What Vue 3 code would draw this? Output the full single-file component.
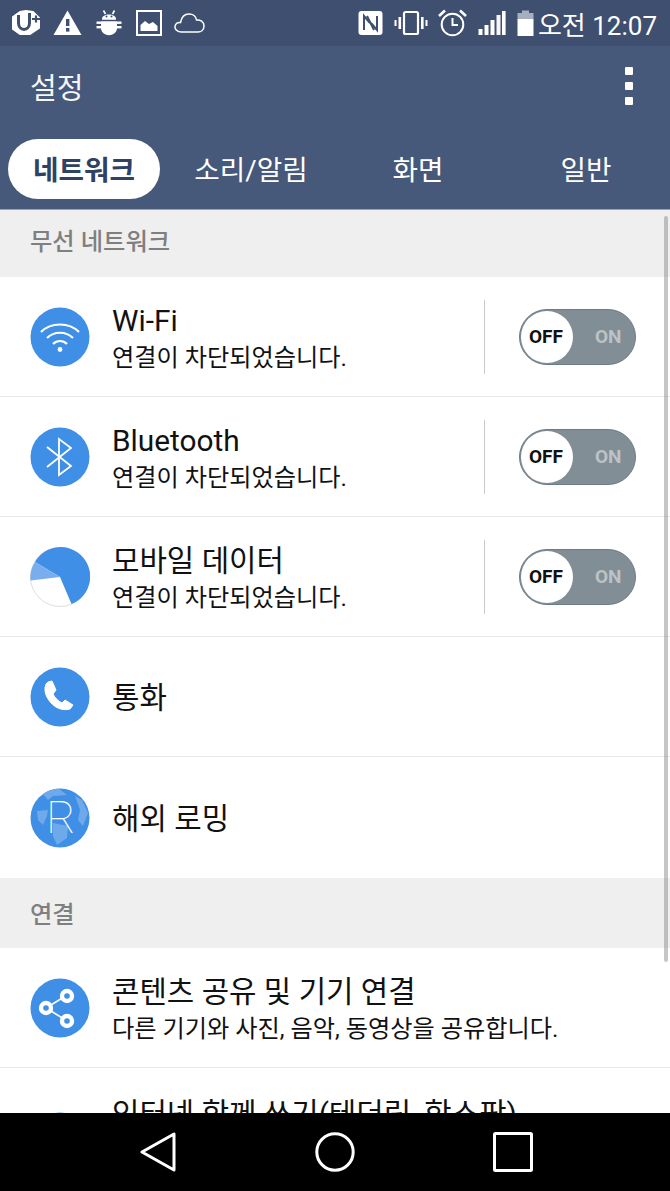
<template>
  <div class="phone">
    <div class="status">
      <div class="status-left">
        <svg class="logo" width="30" height="26" viewBox="0 0 30 26">
          <path d="M9 2 L15 1 L22 2 L28 8 L28 18 L19 24 L9 24 L2 19 L2 7 Z" fill="#fff" stroke="#fff" stroke-width="2" stroke-linejoin="round" />
          <path d="M7.500 5 V13 C7.500 21.500 18.500 21.500 18.500 13 V3" fill="none" stroke="#3f4f6f" stroke-width="3" />
          <path d="M21 9 H29 M25 5.500 V12.500" stroke="#3f4f6f" stroke-width="2.200" />
        </svg>
        <svg class="warn" width="29" height="26" viewBox="0 0 29 26">
          <path d="M14.500 0.500 L28.500 25 H0.500 Z" fill="#fff" />
          <rect x="13" y="9" width="3.400" height="7" fill="#3f4f6f" />
          <rect x="13" y="18" width="3.400" height="3.600" fill="#3f4f6f" />
        </svg>
        <svg class="droid" width="26" height="26" viewBox="0 0 26 26">
          <path d="M6 9 C6 3 20 3 20 9 V9.800 H6 Z" fill="#fff" />
          <path d="M7.500 0.500 L9.500 4 M18.500 0.500 L16.500 4" stroke="#fff" stroke-width="1.600" />
          <rect x="0.500" y="11.500" width="25" height="2.400" fill="#fff" />
          <rect x="0.500" y="16" width="25" height="2.400" fill="#fff" />
          <path d="M5 11.500 H21 V18 C21 27.500 5 27.500 5 18 Z" fill="#fff" />
          <circle cx="10.500" cy="6.600" r="1" fill="#3f4f6f" />
          <circle cx="15.500" cy="6.600" r="1" fill="#3f4f6f" />
        </svg>
        <svg class="pic" width="26" height="26" viewBox="0 0 26 26">
          <rect x="1" y="1" width="24" height="24" fill="none" stroke="#fff" stroke-width="2" />
          <path d="M4.500 21 V15 L9 11 L13 14 L17 12 L21.500 16 V21 Z" fill="#fff" />
        </svg>
        <svg class="cloud" width="31" height="22" viewBox="0 0 31 22">
          <path d="M7 20 C2 20 0.800 16 1 14.500 C1.300 11.500 4 10 6.500 10.500 C7.500 5 11 2 15 2 C19 2 22 4.500 22.500 8 C26 7.500 30 9.500 30 14 C30 18 27 20 24 20 Z" fill="none" stroke="#fff" stroke-width="1.500" />
        </svg>
      </div>
      <div class="status-right">
        <svg class="nfc" width="25" height="26" viewBox="0 0 25 26">
          <rect x="0.500" y="1" width="24" height="24" rx="3" fill="#fff" />
          <path d="M6 20 V6 L12 13 M19 6 V20 L13 13" fill="none" stroke="#3f4f6f" stroke-width="2" />
          <path d="M9 6 L16 20" stroke="#3f4f6f" stroke-width="2" />
        </svg>
        <svg class="vib" width="34" height="26" viewBox="0 0 34 26">
          <rect x="10" y="2" width="14" height="22" rx="1.500" fill="none" stroke="#fff" stroke-width="2.200" />
          <rect x="0.500" y="10" width="2" height="6" fill="#fff" />
          <rect x="4.500" y="7" width="2.600" height="12" fill="#fff" />
          <rect x="27" y="7" width="2.600" height="12" fill="#fff" />
          <rect x="31.500" y="10" width="2" height="6" fill="#fff" />
        </svg>
        <svg class="alarm" width="29" height="28" viewBox="0 0 29 28">
          <circle cx="14.500" cy="15.500" r="10.800" fill="none" stroke="#fff" stroke-width="2" />
          <path d="M14.500 9 V16 H20" fill="none" stroke="#fff" stroke-width="2" />
          <path d="M1 7 L7 1.500 M28 7 L22 1.500" stroke="#fff" stroke-width="2.600" />
        </svg>
        <svg class="signal" width="28" height="26" viewBox="0 0 28 26">
          <rect x="0.500" y="19" width="4" height="6" fill="#fff" />
          <rect x="6.500" y="15" width="4" height="10" fill="#fff" />
          <rect x="12.500" y="10" width="4" height="15" fill="#fff" />
          <rect x="18.500" y="5" width="4" height="20" fill="#fff" opacity="0.950" />
          <rect x="24" y="1" width="3.600" height="24" fill="#fff" />
        </svg>
        <svg class="battery" width="17" height="27" viewBox="0 0 17 27">
          <rect x="5" y="0.500" width="7" height="3" fill="#a6afbf" />
          <rect x="0.500" y="3" width="16" height="6" fill="#a6afbf" />
          <rect x="0.500" y="9" width="16" height="17" fill="#fff" />
        </svg>
        <span class="clock">오전 12:07</span>
      </div>
    </div>

    <div class="header">
      <div class="titlebar">
        <span class="title">설정</span>
        <div class="more"><i></i><i></i><i></i></div>
      </div>
      <div class="tabs">
        <span v-for="(t, i) in tabs" :key="t" class="tab" :class="{ active: i === 0 }">{{ t }}</span>
      </div>
    </div>

    <div class="content">
      <div class="scrollbar"></div>
      <div class="section">무선 네트워크</div>

      <div v-for="r in toggleRows" :key="r.title" class="row">
        <svg v-if="r.icon === 'wifi'" class="icon" viewBox="0 0 60 60">
          <circle cx="30" cy="30" r="29.500" fill="#3f8fe6" />
          <path d="M11 25 C21 15 39 15 49 25" fill="none" stroke="#fff" stroke-width="2.200" />
          <path d="M17 31 C24 24 36 24 43 31" fill="none" stroke="#fff" stroke-width="2.200" />
          <path d="M23 37 C27 33 33 33 37 37" fill="none" stroke="#fff" stroke-width="2.200" />
          <circle cx="30" cy="42.500" r="2.400" fill="#fff" />
        </svg>
        <svg v-else-if="r.icon === 'bt'" class="icon" viewBox="0 0 60 60">
          <circle cx="30" cy="30" r="29.500" fill="#3f8fe6" />
          <path d="M17 20 L41 39 L29 48 V12 L41 21 L17 40" fill="none" stroke="#fff" stroke-width="1.800" />
        </svg>
        <svg v-else class="icon" viewBox="0 0 60 60">
          <circle cx="30" cy="30" r="29.500" fill="#fff" stroke="#d4d4d4" stroke-width="0.800" />
          <path d="M30 30 L41.500 57 A29.500 29.500 0 1 0 5 15 Z" fill="#3f8fe6" />
          <path d="M30 30 L5 15 A29.500 29.500 0 0 0 0.500 33.500 Z" fill="#78aeed" />
        </svg>
        <div class="text">
          <div class="name">{{ r.title }}</div>
          <div class="sub">연결이 차단되었습니다.</div>
        </div>
        <div class="divider"></div>
        <div class="toggle">
          <span class="knob">OFF</span>
          <span class="on">ON</span>
        </div>
      </div>

      <div class="row">
        <svg class="icon" viewBox="0 0 60 60">
          <circle cx="30" cy="30" r="29.500" fill="#3f8fe6" />
          <path d="M18 15 L22 14 L26 23 L23 27 C25 31 28 34 32 36 L35 33 L43 38 L40 42 C30 45 20 38 16 28 C14 22 15 17 18 15 Z" fill="#fff" stroke="#fff" stroke-width="1" stroke-linejoin="round" />
        </svg>
        <div class="text"><div class="name">통화</div></div>
      </div>

      <div class="row plain">
        <svg class="icon" viewBox="0 0 60 60">
          <defs>
            <clipPath id="globe"><circle cx="30" cy="30" r="29.500" /></clipPath>
          </defs>
          <circle cx="30" cy="30" r="29.500" fill="#3f8fe6" />
          <g clip-path="url(#globe)" fill="#6ea9ea">
            <path d="M12 5 L28 0 L37 7 L23 8 L18 12 Z" />
            <path d="M7 23 L18 22 L17 28 L13 37 L8 32 Z" />
            <path d="M23 35 L38 38 L37 50 L27 57 L23 48 Z" />
            <path d="M45 8 L52 12 L58 25 L53 38 L48 32 L50 22 Z" />
          </g>
          <text x="31" y="45" text-anchor="middle" class="roam">R</text>
        </svg>
        <div class="text"><div class="name">해외 로밍</div></div>
      </div>

      <div class="section connect">연결</div>

      <div class="row">
        <svg class="icon" viewBox="0 0 60 60">
          <circle cx="30" cy="30" r="29.500" fill="#3f8fe6" />
          <path d="M16 30 L34 19 M16 30 L34 41" stroke="#fff" stroke-width="1.600" />
          <circle cx="16" cy="30" r="5" fill="#3f8fe6" stroke="#fff" stroke-width="4.400" />
          <circle cx="37" cy="18" r="5" fill="#3f8fe6" stroke="#fff" stroke-width="4.400" />
          <circle cx="37" cy="43" r="5" fill="#3f8fe6" stroke="#fff" stroke-width="4.400" />
        </svg>
        <div class="text">
          <div class="name">콘텐츠 공유 및 기기 연결</div>
          <div class="sub">다른 기기와 사진, 음악, 동영상을 공유합니다.</div>
        </div>
      </div>

      <div class="row cutoff">
        <svg class="icon" viewBox="0 0 60 60">
          <circle cx="30" cy="30" r="29.500" fill="#3f8fe6" />
        </svg>
        <div class="text">
          <div class="name">인터넷 함께 쓰기(테더링, 핫스팟)</div>
        </div>
      </div>
    </div>

    <div class="nav">
      <svg width="36" height="40" viewBox="0 0 36 40">
        <path d="M34 2 V38 L2 20 Z" fill="none" stroke="#fff" stroke-width="3" stroke-linejoin="round" />
      </svg>
      <svg width="40" height="40" viewBox="0 0 40 40">
        <circle cx="20" cy="20" r="18.200" fill="none" stroke="#fff" stroke-width="3" />
      </svg>
      <svg width="40" height="40" viewBox="0 0 40 40">
        <rect x="1.500" y="1.500" width="37" height="37" rx="1" fill="none" stroke="#fff" stroke-width="3" />
      </svg>
    </div>
  </div>
</template>

<script setup>
const tabs = ['네트워크', '소리/알림', '화면', '일반']

const toggleRows = [
  { title: 'Wi-Fi', icon: 'wifi' },
  { title: 'Bluetooth', icon: 'bt' },
  { title: '모바일 데이터', icon: 'data' }
]
</script>

<style>
html, body {
  margin: 0;
  background: #fff;
  overflow: hidden;
}
</style>

<style scoped>
.phone {
  width: 670px;
  height: 1191px;
  display: flex;
  flex-direction: column;
  overflow: hidden;
  font-family: Roboto, "Noto Sans CJK KR", sans-serif;
  color: #111;
}

.status {
  height: 46px;
  flex: none;
  background: #3f4f6f;
  display: flex;
  justify-content: space-between;
  align-items: center;
  padding: 0 13px 0 11px;
  color: #fff;
}
.status svg {
  display: block;
}
.status-left {
  display: flex;
  align-items: center;
}
.status-left .warn {
  margin-left: 12px;
}
.status-left .droid {
  margin-left: 14px;
}
.status-left .pic {
  margin-left: 14px;
}
.status-left .cloud {
  margin-left: 12px;
}
.status-right {
  display: flex;
  align-items: center;
  gap: 10px;
}
.status-right .nfc {
  margin-right: 1px;
}
.status-right .signal {
  margin-left: 1px;
}
.status-right .battery {
  margin-right: -12px;
  margin-left: 1px;
}
.clock {
  font-size: 26px;
  margin-left: 6px;
  white-space: nowrap;
}

.header {
  height: 164px;
  flex: none;
  background: #46597a;
  border-bottom: 1px solid #98a3b6;
  box-sizing: border-box;
  color: #fff;
}
.titlebar {
  height: 82px;
  display: flex;
  justify-content: space-between;
  align-items: center;
  padding: 0 37px 2px 30px;
  box-sizing: border-box;
}
.title {
  font-size: 29px;
  color: #f4f6f8;
}
.more {
  display: flex;
  flex-direction: column;
  gap: 7px;
}
.more i {
  display: block;
  width: 8px;
  height: 8px;
  background: #fff;
  border-radius: 1px;
}
.tabs {
  display: grid;
  grid-template-columns: 152px 182px 152px 184px;
  padding: 11px 0 0 8px;
}
.tab {
  height: 60px;
  box-sizing: border-box;
  padding-bottom: 2px;
  border-radius: 30px;
  display: flex;
  align-items: center;
  justify-content: center;
  font-size: 27.700px;
  color: #fff;
}
.tab.active {
  background: #fff;
  color: #2e4264;
  font-weight: 700;
}

.content {
  flex: 1;
  min-height: 0;
  overflow: hidden;
  position: relative;
  background: #fff;
}
.scrollbar {
  position: absolute;
  top: 6px;
  right: 2px;
  width: 4px;
  height: 746px;
  background: rgba(120, 120, 120, 0.42);
  border-radius: 2px;
}
.section {
  height: 67px;
  background: #efefef;
  color: #7f7f7f;
  font-size: 24.300px;
  font-weight: 500;
  display: flex;
  align-items: center;
  padding: 0 0 8px 30px;
  box-sizing: border-box;
}
.section.connect {
  height: 70px;
  margin-top: 1px;
  padding-bottom: 2px;
}
.row {
  height: 120px;
  box-sizing: border-box;
  border-bottom: 1px solid #e8e8e8;
  display: flex;
  align-items: center;
  padding: 1px 34px 0 30px;
}
.row.plain {
  border-bottom: none;
}
.row.cutoff {
  height: 146px;
  align-items: flex-start;
  padding-top: 26px;
  border-bottom: none;
}
.row.cutoff .icon {
  margin-top: 18px;
}
.row .icon {
  width: 60px;
  height: 60px;
  flex: none;
  margin-right: 22px;
}
.text {
  flex: 1;
  min-width: 0;
  padding-top: 2px;
  white-space: nowrap;
}
.name {
  font-size: 29.800px;
  line-height: 36px;
}
.sub {
  font-size: 24.200px;
  line-height: 30px;
  margin-top: 4px;
}
.divider {
  width: 1px;
  height: 74px;
  background: #c9c9c9;
  margin-right: 34px;
}
.toggle {
  width: 117px;
  height: 56px;
  box-sizing: border-box;
  border-radius: 28px;
  background: #828e96;
  border: 1px solid #6d7d88;
  display: flex;
  align-items: center;
  font-weight: 700;
  font-size: 19px;
}
.knob {
  width: 52px;
  height: 52px;
  box-sizing: border-box;
  padding: 0 2px 2px 0;
  margin-left: 1px;
  border-radius: 50%;
  background: #fff;
  color: #111;
  display: flex;
  align-items: center;
  justify-content: center;
}
.on {
  color: #bcc2c6;
  margin-left: 22px;
  margin-bottom: 2px;
}
.roam {
  font-family: Roboto, sans-serif;
  font-weight: 100;
  font-size: 45px;
  fill: #fff;
}

.nav {
  height: 78px;
  flex: none;
  background: #000;
  display: flex;
  align-items: center;
  justify-content: space-between;
  padding: 0 137px 0 140px;
}
</style>
